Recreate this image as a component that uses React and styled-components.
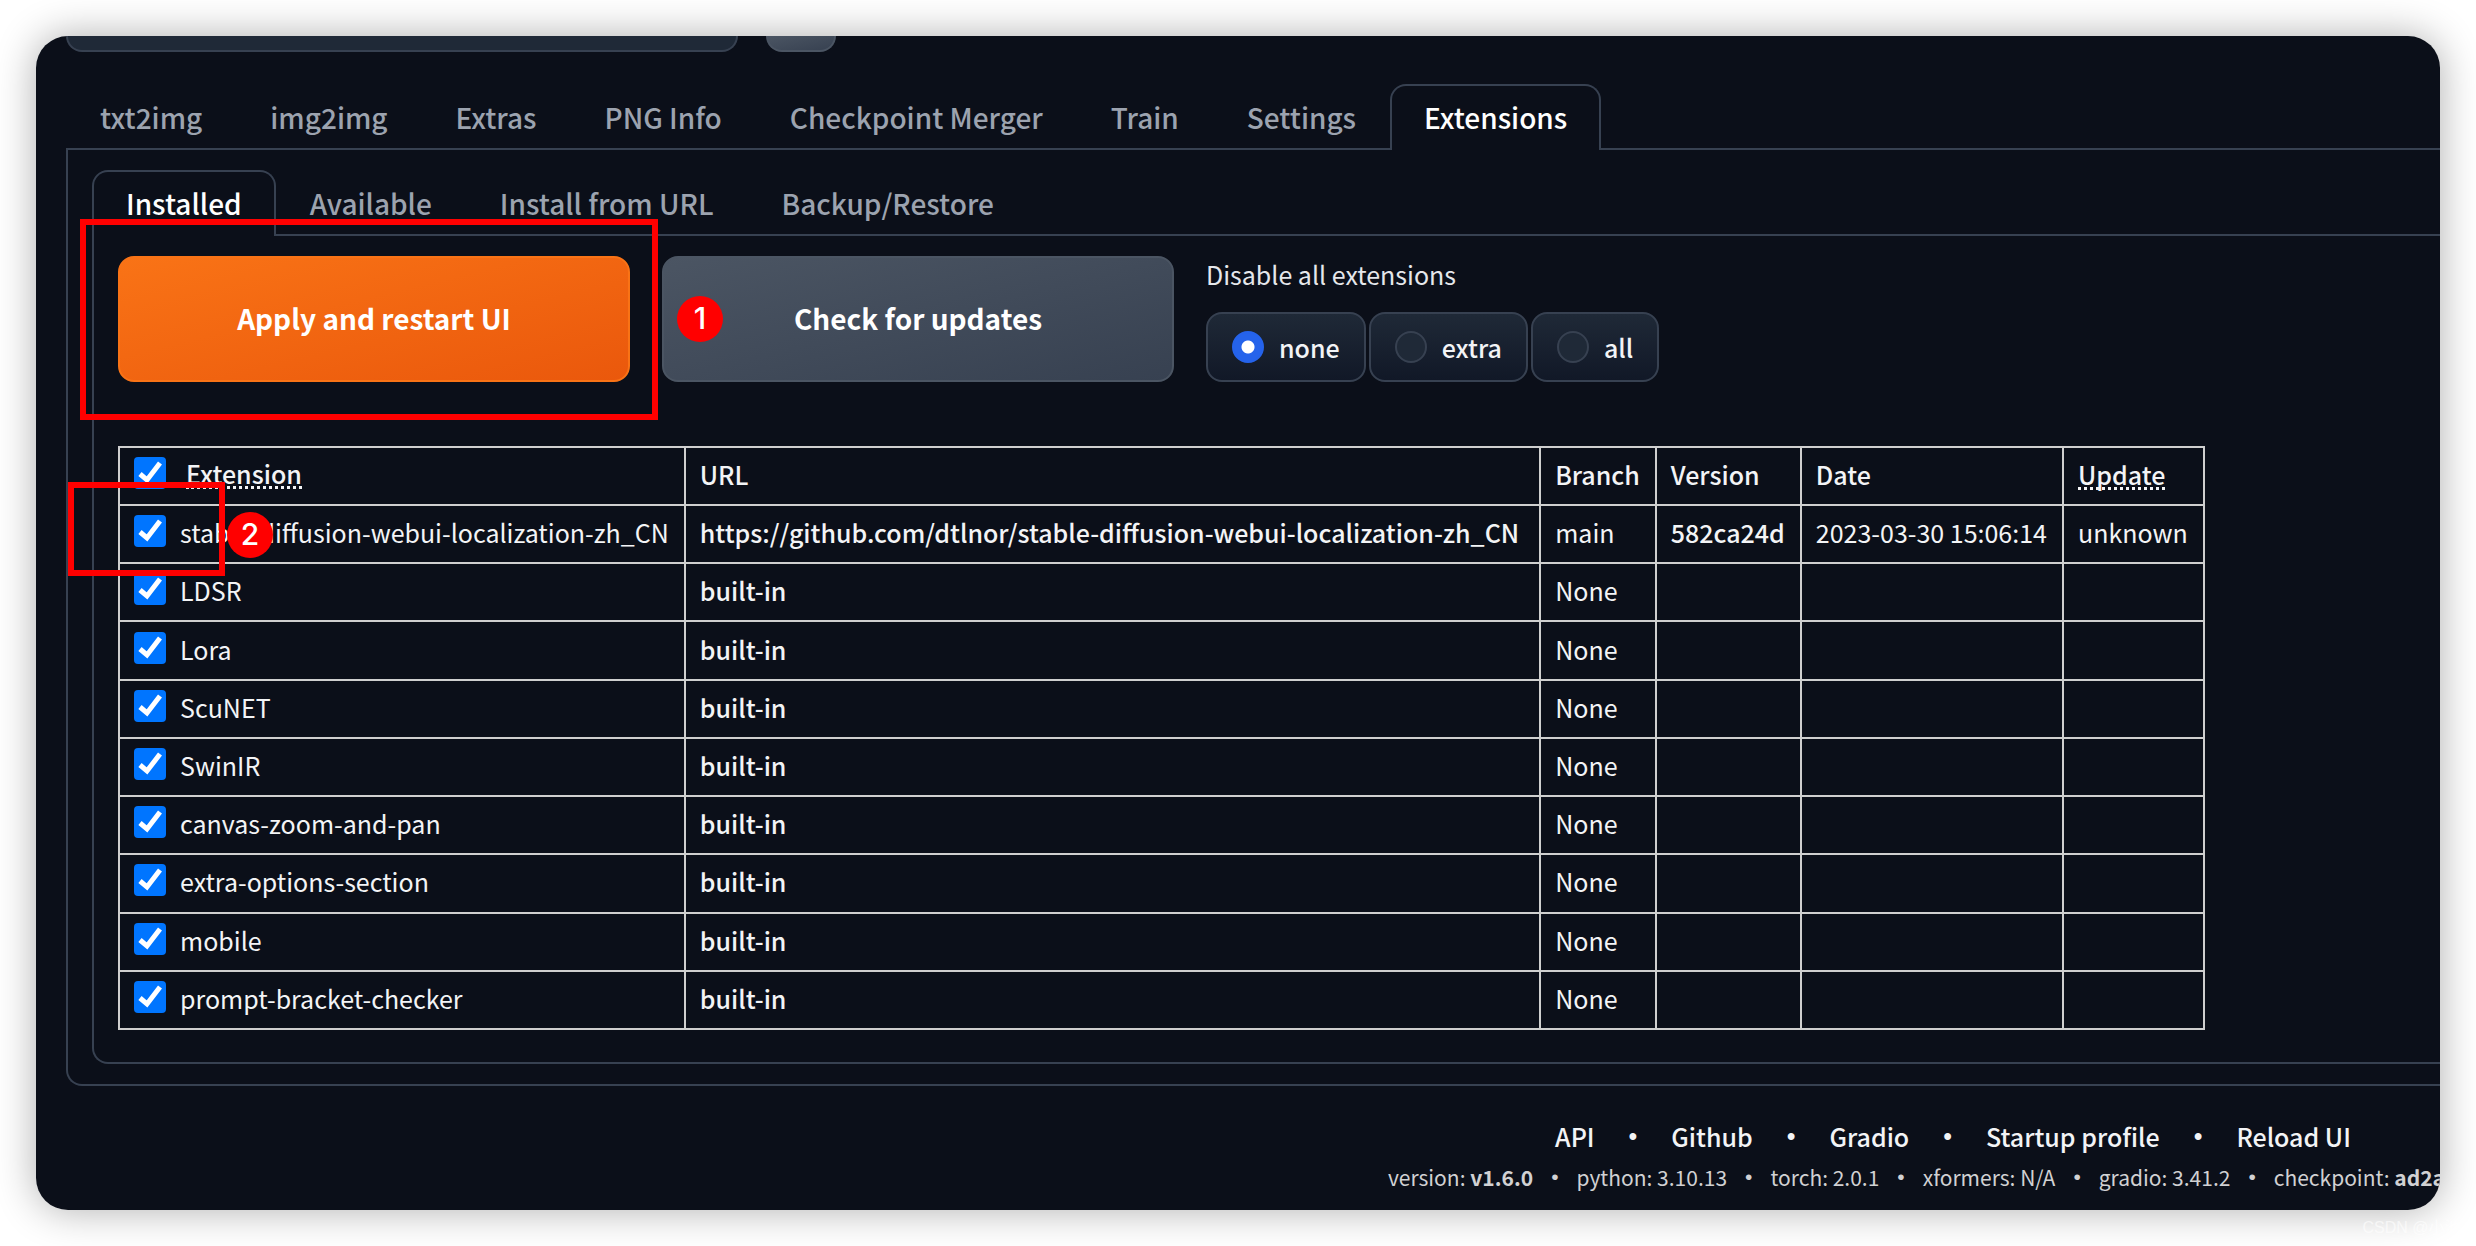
import React from 'react'
import styled, {createGlobalStyle} from 'styled-components'

const line = '#374151'
const cell = '#cfcfcf'

const GlobalStyle = createGlobalStyle`
    *, *::before, *::after {
        box-sizing:border-box;
    }
    body {
        margin:0;
        background:#fff;
        color:#f3f4f6;
        font-family:"Noto Sans CJK SC", "Noto Sans", sans-serif;
        font-size:25px;
        line-height:36px;
    }
    button, input {
        font-family:inherit;
    }
    a {
        color:inherit;
        text-decoration:none;
    }
`

const Page = styled.div`
    position:relative;
    height:100vh;
    padding:36px;
    overflow:hidden;
`

const Shadow = styled.div`
    height:100%;
    border-radius:32px;
    box-shadow:0 0 40px rgba(0,0,0,0.32);
`

const Screen = styled.div`
    position:relative;
    height:100%;
    padding-left:30px;
    overflow:hidden;
    background:#0b0f19;
    border-radius:32px;
`

const TopBar = styled.div`
    display:flex;
    gap:28px;
    height:16px;
    margin-bottom:32px;
`

const ModelInput = styled.input`
    width:672px;
    height:16px;
    padding:0 20px;
    color:#fff;
    background:#1f2937;
    border:2px solid ${line};
    border-top:0;
    border-radius:0 0 16px 16px;
`

const RefreshButton = styled.button`
    width:70px;
    height:16px;
    padding:0;
    background:linear-gradient(to bottom right, #4b5563, #374151);
    border:2px solid #4b5563;
    border-top:0;
    border-radius:0 0 16px 16px;
`

const TabBar = styled.div`
    display:flex;
    height:66px;
    border-bottom:2px solid ${line};
`

const Tab = styled.button`
    height:66px;
    padding:0 32px 2px;
    color:${props => props.$active ? '#fff' : '#9ca3af'};
    background:${props => props.$active ? '#0b0f19' : 'transparent'};
    border:2px solid ${props => props.$active ? line : 'transparent'};
    border-bottom:0;
    border-radius:16px 16px 0 0;
    font-size:28px;
    font-weight:500;
    line-height:40px;
    white-space:nowrap;
`

const Panel = styled.div`
    padding:${props => props.$inner ? '20px 24px 32px' : '20px 0 20px 24px'};
    border:2px solid ${line};
    border-top:0;
    border-right:0;
    border-radius:0 0 0 16px;
`

const Toolbar = styled.div`
    display:flex;
    gap:32px;
    height:126px;
`

const BigButton = styled.button`
    width:512px;
    padding-bottom:4px;
    color:#fff;
    background:${props => props.$primary
        ? 'linear-gradient(to bottom right, #f97316, #ea580c)'
        : 'linear-gradient(to bottom right, #4b5563, #374151)'};
    border:2px solid ${props => props.$primary ? '#f97316' : '#4b5563'};
    border-radius:16px;
    font-size:28px;
    font-weight:700;
`

const RadioGroup = styled.fieldset`
    display:flex;
    align-items:flex-start;
    gap:3px;
    margin:0;
    padding:0;
    border:0;
    legend {
        padding:0 0 20px;
        color:#e5e7eb;
    }
`

const RadioLabel = styled.label`
    display:flex;
    align-items:center;
    gap:15px;
    height:70px;
    padding:0 24px;
    background:linear-gradient(to bottom, #1f2937, #111827);
    border:2px solid ${line};
    border-radius:16px;
    font-weight:500;
`

const Radio = styled.input`
    appearance:none;
    width:32px;
    height:32px;
    margin:0;
    background:#1f2937;
    border:2px solid ${line};
    border-radius:50%;
    &:checked {
        background:radial-gradient(circle, #fff 6px, #2563eb 7px);
        border-color:#2563eb;
    }
`

const Table = styled.table`
    height:584px;
    margin-top:64px;
    border-collapse:collapse;
    th, td {
        height:58px;
        padding:0 15px 4px 14px;
        border:2px solid ${cell};
        text-align:left;
        font-weight:400;
        white-space:nowrap;
    }
    td:nth-child(2) {
        padding-right:20px;
    }
    th, a {
        font-weight:500;
    }
    abbr {
        display:inline-block;
        line-height:26px;
        text-decoration:none;
        border-bottom:3px dotted #f3f4f6;
    }
`

const CheckLabel = styled.label`
    display:flex;
    align-items:center;
    gap:${props => props.$gap || 14}px;
`

const CheckBox = styled.span`
    position:relative;
    display:inline-flex;
    width:32px;
    height:32px;
    margin-bottom:2px;
    input {
        appearance:none;
        width:32px;
        height:32px;
        margin:0;
        background:#0075ff;
        border-radius:4px;
    }
    svg {
        position:absolute;
        inset:0;
        pointer-events:none;
    }
`

/* the page is wider than the window, so the centred footer runs off to the right */
const Footer = styled.footer`
    width:3774px;
    margin-top:32px;
    white-space:nowrap;
`

const Links = styled.div`
    display:flex;
    justify-content:center;
    gap:34px;
    font-weight:500;
`

const Versions = styled.div`
    display:flex;
    justify-content:center;
    gap:18px;
    margin-top:5px;
    color:#d1d1d3;
    font-size:21px;
`

const Dot = styled.span`
    font-family:"Liberation Sans", sans-serif;
`

const Frame = styled.div`
    position:absolute;
    left:${props => props.$x}px;
    top:${props => props.$y}px;
    width:${props => props.$w}px;
    height:${props => props.$h}px;
    border:6px solid #f00;
    pointer-events:none;
`

const Badge = styled.div`
    position:absolute;
    left:${props => props.$x}px;
    top:${props => props.$y}px;
    width:46px;
    height:46px;
    color:#fff;
    background:#f00;
    border-radius:50%;
    font-family:Inter, sans-serif;
    font-size:30px;
    font-weight:500;
    line-height:44px;
    text-align:center;
`

const Watermark = styled.div`
    position:absolute;
    right:12px;
    bottom:6px;
    color:rgba(255,255,255,0.6);
    font-family:"Liberation Sans", "Noto Sans CJK SC", sans-serif;
    font-size:16px;
    line-height:24px;
`

const mainTabs = ['txt2img', 'img2img', 'Extras', 'PNG Info', 'Checkpoint Merger', 'Train', 'Settings', 'Extensions']
const subTabs = ['Installed', 'Available', 'Install from URL', 'Backup/Restore']
const builtIn = ['LDSR', 'Lora', 'ScuNET', 'SwinIR', 'canvas-zoom-and-pan', 'extra-options-section', 'mobile', 'prompt-bracket-checker']
const repo = 'https://github.com/dtlnor/stable-diffusion-webui-localization-zh_CN'

const rows = [
    {
        name: 'stable-diffusion-webui-localization-zh_CN',
        url: repo,
        branch: 'main',
        version: '582ca24d',
        date: '2023-03-30 15:06:14',
        update: 'unknown',
    },
    ...builtIn.map(name => ({name, url: 'built-in', branch: 'None'})),
]

const links = ['API', 'Github', 'Gradio', 'Startup profile', 'Reload UI']

const versions = [
    ['version', <b>v1.6.0</b>],
    ['python', '3.10.13'],
    ['torch', '2.0.1'],
    ['xformers', 'N/A'],
    ['gradio', '3.41.2'],
    ['checkpoint', <b>ad2a33c361</b>],
]

function Check({children, gap}) {
    return (
        <CheckLabel $gap={gap}>
            <CheckBox>
                <input type="checkbox" defaultChecked />
                <svg viewBox="0 0 32 32" fill="none" stroke="#fff" strokeWidth="5">
                    <path d="M6 17l7 6L26 6" />
                </svg>
            </CheckBox>
            {children}
        </CheckLabel>
    )
}

function App() {
    return (
        <Page>
            <GlobalStyle />
            <Shadow>
                <Screen>
                    <TopBar>
                        <ModelInput type="text" aria-label="Checkpoint" />
                        <RefreshButton aria-label="Refresh" />
                    </TopBar>
                    <TabBar>
                        {mainTabs.map(tab => <Tab key={tab} $active={tab === 'Extensions'}>{tab}</Tab>)}
                    </TabBar>
                    <Panel>
                        <TabBar>
                            {subTabs.map(tab => <Tab key={tab} $active={tab === 'Installed'}>{tab}</Tab>)}
                        </TabBar>
                        <Panel $inner>
                            <Toolbar>
                                <BigButton $primary>Apply and restart UI</BigButton>
                                <BigButton>Check for updates</BigButton>
                                <RadioGroup>
                                    <legend>Disable all extensions</legend>
                                    {['none', 'extra', 'all'].map(option => (
                                        <RadioLabel key={option}>
                                            <Radio type="radio" name="disable" defaultChecked={option === 'none'} />
                                            {option}
                                        </RadioLabel>
                                    ))}
                                </RadioGroup>
                            </Toolbar>
                            <Table>
                                <thead>
                                    <tr>
                                        <th><Check gap={20}><abbr>Extension</abbr></Check></th>
                                        <th>URL</th>
                                        <th>Branch</th>
                                        <th>Version</th>
                                        <th>Date</th>
                                        <th><abbr>Update</abbr></th>
                                    </tr>
                                </thead>
                                <tbody>
                                    {rows.map(row => (
                                        <tr key={row.name}>
                                            <td><Check>{row.name}</Check></td>
                                            <td><a href="#">{row.url}</a></td>
                                            <td>{row.branch}</td>
                                            <td>{row.version && <a href="#">{row.version}</a>}</td>
                                            <td>{row.date}</td>
                                            <td>{row.update}</td>
                                        </tr>
                                    ))}
                                </tbody>
                            </Table>
                        </Panel>
                    </Panel>
                    <Footer>
                        <Links>
                            {links.map((link, i) => (
                                <React.Fragment key={link}>
                                    {i > 0 && <Dot>•</Dot>}
                                    <a href="#">{link}</a>
                                </React.Fragment>
                            ))}
                        </Links>
                        <Versions>
                            {versions.map(([name, value], i) => (
                                <React.Fragment key={name}>
                                    {i > 0 && <Dot>•</Dot>}
                                    <span>{name}: {value}</span>
                                </React.Fragment>
                            ))}
                        </Versions>
                    </Footer>
                    <Frame $x={44} $y={183} $w={578} $h={201} />
                    <Frame $x={32} $y={446} $w={157} $h={94} />
                    <Badge $x={641} $y={260}>1</Badge>
                    <Badge $x={191} $y={476}>2</Badge>
                </Screen>
            </Shadow>
            <Watermark>CSDN @小池i</Watermark>
        </Page>
    )
}

export default App
